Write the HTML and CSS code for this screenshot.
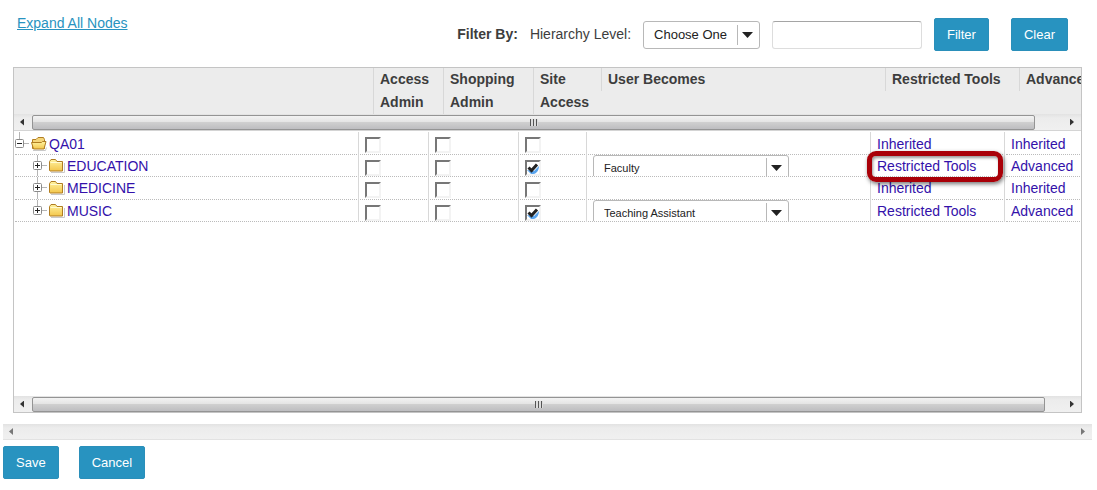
FILE: index.html
```html
<!DOCTYPE html>
<html lang="en">
<head>
<meta charset="utf-8">
<title>Delegated Access</title>
<link rel="stylesheet" href="styles.css">
</head>
<body>
<svg class="defs" aria-hidden="true">
  <defs>
    <linearGradient id="gold" x1="0" y1="0" x2="0" y2="1">
      <stop offset="0" stop-color="#fff3a0"/><stop offset="1" stop-color="#f3c64c"/>
    </linearGradient>
    <symbol id="box" viewBox="0 0 9 9">
      <rect x=".5" y=".5" width="8" height="8" rx="1" fill="#fff" stroke="#8a8a8a"/>
      <path d="M2 4.500h5" stroke="#222"/>
    </symbol>
    <symbol id="closed" viewBox="0 0 16 15">
      <path d="M2 14.500h13.500V5" fill="none" stroke="#c9c9c9"/>
      <path d="M.5 12.500V3.500L2 1.500h4.500L8 3.500h5.500v9.500H1z" fill="url(#gold)" stroke="#b07d22" stroke-linejoin="round"/>
      <path d="M1.500 4.500h11" stroke="#fffbd0"/>
    </symbol>
    <symbol id="open" viewBox="0 0 16 15">
      <path d="M2 14.500h12.500l1-3" fill="none" stroke="#c9c9c9"/>
      <path d="M1.500 12.500V3.500L5 3.500 7 1.500h5.500l1 2v9z" fill="#f5d67a" stroke="#b07d22" stroke-linejoin="round"/>
      <path d="M.5 6.500h10l1-1h3.500l-2 7.500H2.500z" fill="url(#gold)" stroke="#b07d22" stroke-linejoin="round"/>
    </symbol>
    <symbol id="root-node" viewBox="0 0 32 23">
      <path d="M4.500 0v7M9 11.500h5" stroke="#b5b5b5"/>
      <use href="#box" x="0" y="7" width="9" height="9"/>
      <use href="#open" x="16" y="4" width="16" height="15"/>
    </symbol>
    <symbol id="mid-node" viewBox="0 0 32 23">
      <path d="M4.500 0v23M9 10.500h5" stroke="#b5b5b5"/>
      <use href="#box" x="0" y="6" width="9" height="9"/>
      <path d="M4.500 8v5" stroke="#222"/>
      <use href="#closed" x="16" y="3" width="16" height="15"/>
    </symbol>
    <symbol id="last-node" viewBox="0 0 32 23">
      <path d="M4.500 0v7M9 10.500h5" stroke="#b5b5b5"/>
      <use href="#box" x="0" y="6" width="9" height="9"/>
      <path d="M4.500 8v5" stroke="#222"/>
      <use href="#closed" x="16" y="3" width="16" height="15"/>
    </symbol>
  </defs>
</svg>

<header class="toolbar">
  <a class="expand" href="#">Expand All Nodes</a>
  <form class="filter">
    <strong>Filter By:</strong>
    <label class="filter-label" for="level">Hierarchy Level:</label>
    <select class="select select-level" id="level"><option>Choose One</option></select>
    <input class="filter-text" type="text" aria-label="Filter value">
    <button class="button" type="button">Filter</button>
    <button class="button button-clear" type="button">Clear</button>
  </form>
</header>

<main class="panel">
  <div class="panel-head">
    <table class="grid head-grid">
      <colgroup><col class="c-tree"><col class="c-access"><col class="c-shop"><col class="c-site"><col><col class="c-tools"><col class="c-adv"></colgroup>
      <tr>
        <td></td>
        <th scope="col"><div class="tall">Access<br>Admin</div></th>
        <th scope="col"><div class="tall">Shopping<br>Admin</div></th>
        <th scope="col"><div class="tall">Site<br>Access</div></th>
        <th scope="col"><div>User Becomes</div></th>
        <th scope="col"><div>Restricted Tools</div></th>
        <th scope="col"><div>Advanced</div></th>
      </tr>
    </table>
    <div class="scroll"><i class="arrow left"></i><span class="thumb thumb-head"><i class="grip"></i></span><i class="arrow right"></i></div>
  </div>
  <div class="panel-body">
    <table class="grid body-grid">
      <colgroup><col class="c-tree"><col class="c-access"><col class="c-shop"><col class="c-site"><col><col class="c-tools"><col class="c-adv"></colgroup>
      <tr>
        <td><div class="cell tree"><svg class="node"><use href="#root-node"/></svg><a href="#">QA01</a></div></td>
        <td><div class="cell check"><input type="checkbox" aria-label="QA01 access admin"></div></td>
        <td><div class="cell check"><input type="checkbox" aria-label="QA01 shopping admin"></div></td>
        <td><div class="cell check"><input type="checkbox" aria-label="QA01 site access"></div></td>
        <td><div class="cell"></div></td>
        <td><div class="cell link"><a href="#">Inherited</a></div></td>
        <td><div class="cell link"><a href="#">Inherited</a></div></td>
      </tr>
      <tr class="child">
        <td><div class="cell tree"><svg class="node"><use href="#mid-node"/></svg><a href="#">EDUCATION</a></div></td>
        <td><div class="cell check"><input type="checkbox" aria-label="EDUCATION access admin"></div></td>
        <td><div class="cell check"><input type="checkbox" aria-label="EDUCATION shopping admin"></div></td>
        <td><div class="cell check"><input type="checkbox" checked aria-label="EDUCATION site access"></div></td>
        <td><div class="cell role"><select class="select select-role" aria-label="EDUCATION user becomes"><option>Faculty</option></select></div></td>
        <td class="marked"><div class="cell link"><a href="#">Restricted Tools</a></div><span class="marker"></span></td>
        <td><div class="cell link"><a href="#">Advanced</a></div></td>
      </tr>
      <tr class="child">
        <td><div class="cell tree"><svg class="node"><use href="#mid-node"/></svg><a href="#">MEDICINE</a></div></td>
        <td><div class="cell check"><input type="checkbox" aria-label="MEDICINE access admin"></div></td>
        <td><div class="cell check"><input type="checkbox" aria-label="MEDICINE shopping admin"></div></td>
        <td><div class="cell check"><input type="checkbox" aria-label="MEDICINE site access"></div></td>
        <td><div class="cell"></div></td>
        <td><div class="cell link"><a href="#">Inherited</a></div></td>
        <td><div class="cell link"><a href="#">Inherited</a></div></td>
      </tr>
      <tr class="child">
        <td><div class="cell tree"><svg class="node"><use href="#last-node"/></svg><a href="#">MUSIC</a></div></td>
        <td><div class="cell check"><input type="checkbox" aria-label="MUSIC access admin"></div></td>
        <td><div class="cell check"><input type="checkbox" aria-label="MUSIC shopping admin"></div></td>
        <td><div class="cell check"><input type="checkbox" checked aria-label="MUSIC site access"></div></td>
        <td><div class="cell role"><select class="select select-role" aria-label="MUSIC user becomes"><option>Teaching Assistant</option></select></div></td>
        <td><div class="cell link"><a href="#">Restricted Tools</a></div></td>
        <td><div class="cell link"><a href="#">Advanced</a></div></td>
      </tr>
    </table>
  </div>
  <div class="scroll"><i class="arrow left"></i><span class="thumb thumb-body"><i class="grip"></i></span><i class="arrow right"></i></div>
</main>

<div class="scroll page-scroll"><i class="arrow left"></i><i class="arrow right"></i></div>

<footer class="actions">
  <button class="button" type="button">Save</button>
  <button class="button" type="button">Cancel</button>
</footer>
</body>
</html>
```
FILE: styles.css
```css
* { box-sizing: border-box; }
body {
  margin: 0;
  background: #fff;
  color: #3d3d3d;
  font: 14px/23px "Liberation Sans", Arial, sans-serif;
}
.defs { position: absolute; width: 0; height: 0; }

.toolbar {
  display: flex;
  justify-content: space-between;
  align-items: flex-start;
  padding: 12px 29px 16px 17px;
}
.expand { color: #2893c0; }
.filter {
  display: flex;
  align-items: center;
  gap: 12px;
  padding-top: 6px;
}
.button {
  height: 33px;
  padding: 0 12px;
  border: 1px solid #2a8fba;
  border-radius: 2px;
  background: #2893c0;
  color: #fff;
  font: 13px "Liberation Sans", Arial, sans-serif;
}
.button-clear { margin-left: 10px; }
.filter-text {
  width: 150px;
  height: 28px;
  border: 1px solid #ddd;
  border-top-color: #a5a5a5;
  border-radius: 3px;
}
.select {
  appearance: none;
  height: 28px;
  border: 1px solid #b8b8b8;
  border-radius: 3px;
  padding: 0 24px 0 10px;
  color: #222;
  background: #fff url("data:image/svg+xml,%3Csvg xmlns='http://www.w3.org/2000/svg' width='22' height='20'%3E%3Cpath d='M.5 0v20' stroke='%23b8b8b8'/%3E%3Cpath d='M5 7h11l-5.500 6z' fill='%23222'/%3E%3C/svg%3E") right center no-repeat;
  font: 13px "Liberation Sans", Arial, sans-serif;
}
.select-level { width: 117px; }
.select-role {
  width: 196px;
  height: 26px;
  font-size: 11px;
}

.panel {
  margin: 0 15px 0 13px;
  border: 1px solid #c4c4c4;
}
.panel-head {
  background: #ececec;
  border-bottom: 1px solid #d4d4d4;
}
.panel-body {
  min-height: 265px;
  padding-top: 1px;
}
.grid {
  width: 100%;
  table-layout: fixed;
  border-collapse: separate;
  border-spacing: 0;
}
.grid td, .grid th { padding: 0; text-align: left; vertical-align: top; }
.c-access { width: 70px; }
.c-shop { width: 90px; }
.c-site { width: 68px; }
.c-tools { width: 134px; }
.head-grid .c-tree { width: 359px; }
.head-grid .c-adv { width: 62px; }
.body-grid .c-tree { width: 344px; }
.body-grid .c-adv { width: 77px; }

.head-grid th div {
  height: 23px;
  padding-left: 6px;
  border-left: 1px solid #d8d8d8;
  overflow: hidden;
  white-space: nowrap;
}
.head-grid th .tall { height: 46px; }

.body-grid td { padding: 0 1px; }
.body-grid td + td { border-left: 1px solid #d8d8d8; }
.cell {
  display: flex;
  height: 22px;
  border-bottom: 1px dotted #bbb;
  overflow: hidden;
  line-height: 24px;
  white-space: nowrap;
}
.body-grid tr:nth-child(odd) .cell { height: 23px; }
.cell a { color: #3311aa; text-decoration: none; }
.tree { gap: 2px; }
.child .cell { line-height: 22px; }
.child .tree { padding-left: 18px; }
.node { flex: none; width: 32px; height: 23px; }
.link { padding-left: 5px; }
.role { padding-left: 5px; }
.check { padding: 5px 0 0 5px; }
.check input {
  appearance: none;
  flex: none;
  width: 16px;
  height: 16px;
  margin: 0;
  border: 2px solid #f3f3f3;
  border-top-color: #777;
  border-left-color: #777;
  background: #fff;
}
.check input:checked {
  background: #fff url("data:image/svg+xml,%3Csvg xmlns='http://www.w3.org/2000/svg' width='12' height='12'%3E%3Cpath d='M0 8l4 4h3c3-1 5-4 5-8l-5 5z' fill='%235aa5ee'/%3E%3Cpath d='M1.500 5.500l3 3L10 2.500' fill='none' stroke='%23222' stroke-width='3'/%3E%3C/svg%3E") center no-repeat;
}

.marked { position: relative; }
.marker {
  position: absolute;
  inset: -4px 1px -5px -4px;
  border: 5px solid #a90008;
  border-radius: 9px;
  box-shadow: 1px 2px 4px #0008, inset 1px 2px 3px #0006;
  pointer-events: none;
}

.scroll {
  display: flex;
  align-items: center;
  justify-content: space-between;
  height: 16px;
  background: linear-gradient(#e2e2e2, #ececec 4px, #f0f0f0);
}
.arrow {
  width: 18px;
  height: 7px;
  background: #333;
}
.arrow.left { clip-path: polygon(6px 50%, 10px 0, 10px 100%); }
.arrow.right { clip-path: polygon(7px 0, 11px 50%, 7px 100%); }
.thumb {
  display: flex;
  flex: 1;
  align-items: center;
  justify-content: center;
  height: 15px;
  border: 1px solid #949494;
  border-radius: 2px;
  background: linear-gradient(#f3f3f3, #e4e4e4 45%, #cfcfcf 50%, #bdbdc0);
}
.thumb-head { margin-right: 28px; }
.thumb-body { margin-right: 18px; }
.grip {
  width: 8px;
  height: 7px;
  background: repeating-linear-gradient(90deg, #555 0 1px, #ddd 1px 3px);
}
.page-scroll {
  margin: 11px 5px 0 3px;
  border-bottom: 1px solid #e2e2e2;
}
.page-scroll .arrow { background: #777; }

.actions {
  display: flex;
  gap: 20px;
  padding: 6px 3px 0;
}
```
